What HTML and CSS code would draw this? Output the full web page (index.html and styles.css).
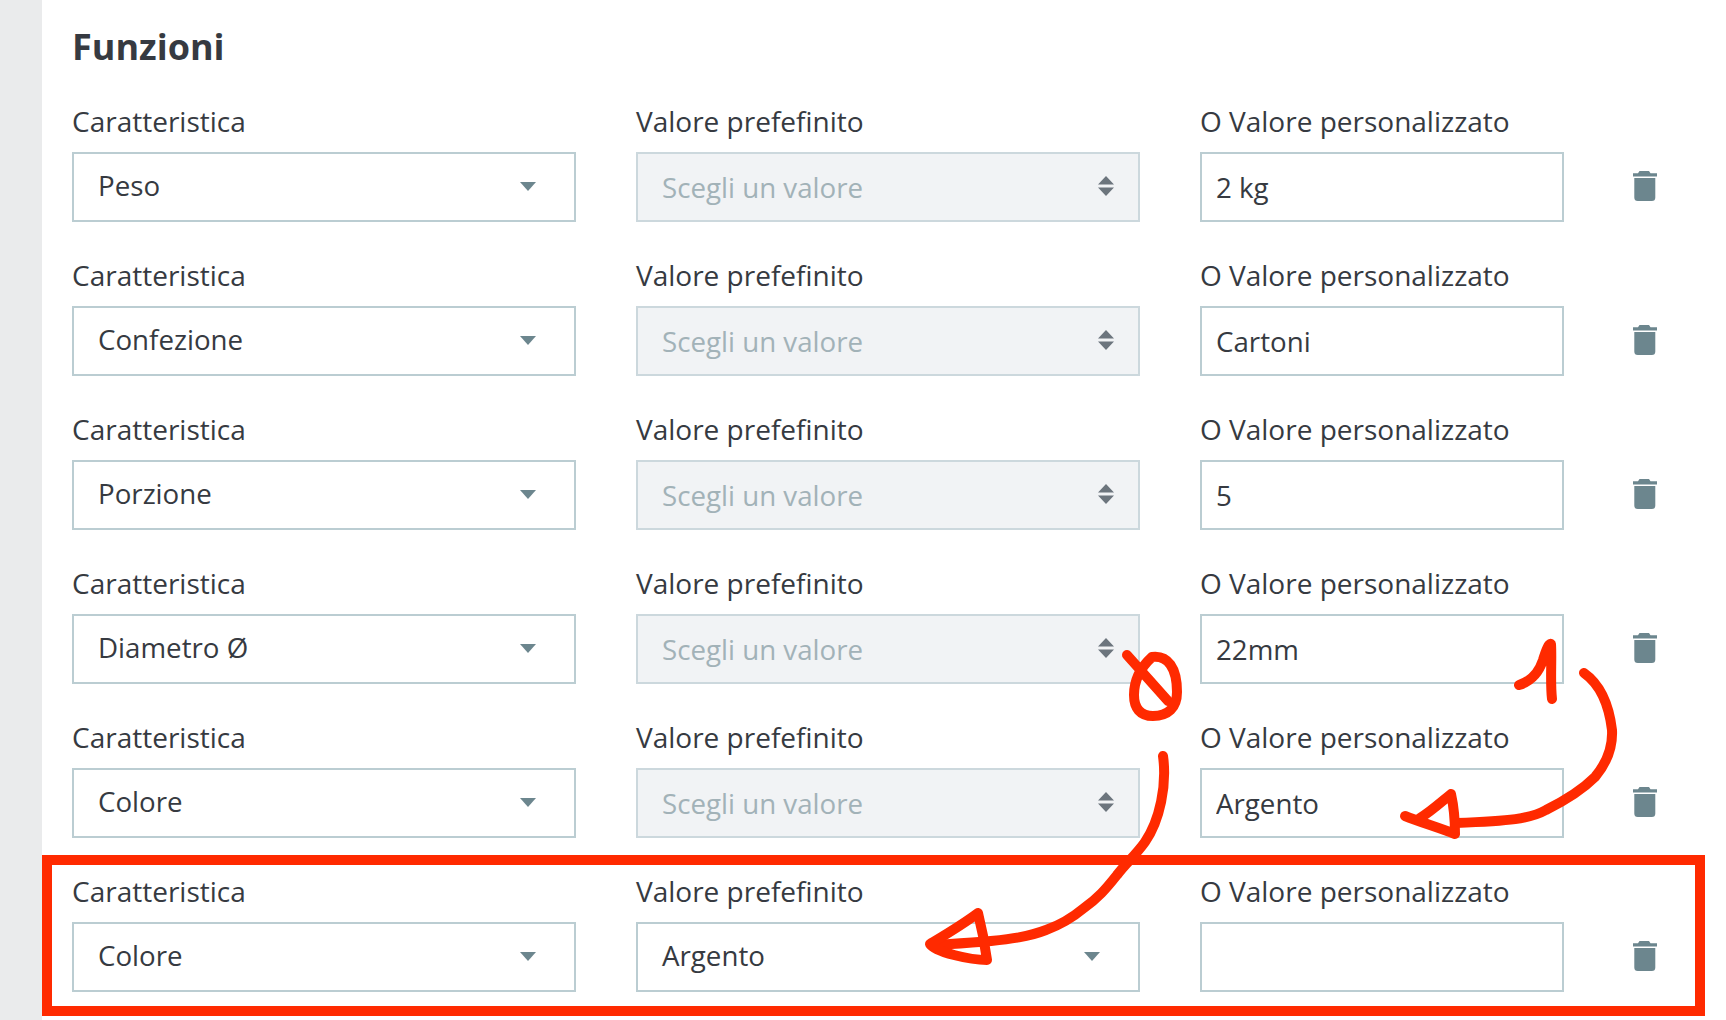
FILE: index.html
```html
<!DOCTYPE html>
<html lang="it">
<head>
  <meta charset="UTF-8" />
  <title>Funzioni</title>
  <link rel="stylesheet" href="styles.css">
</head>
<body>
  <div class="sidebar"></div>
  <main class="content">
    <h2>Funzioni</h2>

    <div class="riga">
      <div class="campo"><label>Caratteristica</label><div class="select"><span>Peso</span><i class="freccia"></i></div></div>
      <div class="campo"><label>Valore prefefinito</label><div class="select disabled"><span>Scegli un valore</span><svg class="updown" viewBox="0 0 16 20"><path d="M8 0l8 8.500H0zM8 20L0 11.500h16z"/></svg></div></div>
      <div class="campo"><label>O Valore personalizzato</label><input class="testo" type="text" value="2 kg"></div>
      <svg class="cestino" viewBox="0 0 24 30"><path d="M6.500 0h9.500l1.500 2.200H24v3.400H0V2.200h5z"/><path d="M1.300 7h21v19.500a3.500 3.500 0 0 1-3.500 3.500H4.800a3.500 3.500 0 0 1-3.500-3.500z"/></svg>
    </div>

    <div class="riga">
      <div class="campo"><label>Caratteristica</label><div class="select"><span>Confezione</span><i class="freccia"></i></div></div>
      <div class="campo"><label>Valore prefefinito</label><div class="select disabled"><span>Scegli un valore</span><svg class="updown" viewBox="0 0 16 20"><path d="M8 0l8 8.500H0zM8 20L0 11.500h16z"/></svg></div></div>
      <div class="campo"><label>O Valore personalizzato</label><input class="testo" type="text" value="Cartoni"></div>
      <svg class="cestino" viewBox="0 0 24 30"><path d="M6.500 0h9.500l1.500 2.200H24v3.400H0V2.200h5z"/><path d="M1.300 7h21v19.500a3.500 3.500 0 0 1-3.500 3.500H4.800a3.500 3.500 0 0 1-3.500-3.500z"/></svg>
    </div>

    <div class="riga">
      <div class="campo"><label>Caratteristica</label><div class="select"><span>Porzione</span><i class="freccia"></i></div></div>
      <div class="campo"><label>Valore prefefinito</label><div class="select disabled"><span>Scegli un valore</span><svg class="updown" viewBox="0 0 16 20"><path d="M8 0l8 8.500H0zM8 20L0 11.500h16z"/></svg></div></div>
      <div class="campo"><label>O Valore personalizzato</label><input class="testo" type="text" value="5"></div>
      <svg class="cestino" viewBox="0 0 24 30"><path d="M6.500 0h9.500l1.500 2.200H24v3.400H0V2.200h5z"/><path d="M1.300 7h21v19.500a3.500 3.500 0 0 1-3.500 3.500H4.800a3.500 3.500 0 0 1-3.500-3.500z"/></svg>
    </div>

    <div class="riga">
      <div class="campo"><label>Caratteristica</label><div class="select"><span>Diametro Ø</span><i class="freccia"></i></div></div>
      <div class="campo"><label>Valore prefefinito</label><div class="select disabled"><span>Scegli un valore</span><svg class="updown" viewBox="0 0 16 20"><path d="M8 0l8 8.500H0zM8 20L0 11.500h16z"/></svg></div></div>
      <div class="campo"><label>O Valore personalizzato</label><input class="testo" type="text" value="22mm"></div>
      <svg class="cestino" viewBox="0 0 24 30"><path d="M6.500 0h9.500l1.500 2.200H24v3.400H0V2.200h5z"/><path d="M1.300 7h21v19.500a3.500 3.500 0 0 1-3.500 3.500H4.800a3.500 3.500 0 0 1-3.500-3.500z"/></svg>
    </div>

    <div class="riga">
      <div class="campo"><label>Caratteristica</label><div class="select"><span>Colore</span><i class="freccia"></i></div></div>
      <div class="campo"><label>Valore prefefinito</label><div class="select disabled"><span>Scegli un valore</span><svg class="updown" viewBox="0 0 16 20"><path d="M8 0l8 8.500H0zM8 20L0 11.500h16z"/></svg></div></div>
      <div class="campo"><label>O Valore personalizzato</label><input class="testo" type="text" value="Argento"></div>
      <svg class="cestino" viewBox="0 0 24 30"><path d="M6.500 0h9.500l1.500 2.200H24v3.400H0V2.200h5z"/><path d="M1.300 7h21v19.500a3.500 3.500 0 0 1-3.500 3.500H4.800a3.500 3.500 0 0 1-3.500-3.500z"/></svg>
    </div>

    <div class="riga">
      <div class="campo"><label>Caratteristica</label><div class="select"><span>Colore</span><i class="freccia"></i></div></div>
      <div class="campo"><label>Valore prefefinito</label><div class="select"><span>Argento</span><i class="freccia"></i></div></div>
      <div class="campo"><label>O Valore personalizzato</label><input class="testo" type="text" value=""></div>
      <svg class="cestino" viewBox="0 0 24 30"><path d="M6.500 0h9.500l1.500 2.200H24v3.400H0V2.200h5z"/><path d="M1.300 7h21v19.500a3.500 3.500 0 0 1-3.500 3.500H4.800a3.500 3.500 0 0 1-3.500-3.500z"/></svg>
    </div>
  </main>

  <!-- annotazioni a mano sopra la pagina -->
  <svg class="annotazioni" viewBox="0 0 1726 1020">
    <rect class="riquadro" x="47" y="860" width="1653" height="151"/>
    <!-- Ø -->
    <path d="M1127 655L1168 701"/>
    <path d="M1152 657C1168 655 1177 668 1177 692C1177 708 1168 716 1153 716C1140 716 1134 708 1134 695C1134 682 1140 668 1152 657"/>
    <!-- 1 -->
    <path d="M1519 685C1532 681 1539 672 1543 660C1546 650 1549 643 1551 644C1552 660 1550 682 1552 699"/>
    <!-- freccia destra -->
    <path d="M1584 673C1601 685 1609 705 1612 730C1613 750 1605 765 1595 777C1580 792 1562 802 1546 810C1530 819 1510 821 1456 823"/>
    <path d="M1405 816C1420 822 1440 828 1455 834C1455 820 1453 803 1451 794C1440 803 1430 812 1420 818"/>
    <!-- freccia in basso -->
    <path d="M1163 756C1167 785 1160 820 1145 842C1135 856 1125 864 1117 875C1105 890 1098 898 1084 908C1072 918 1060 925 1046 930C1028 937 1010 939 991 941C970 943 950 944 935 945"/>
    <path d="M978 913C962 925 945 935 930 944C935 952 970 960 987 960C985 945 981 925 978 913"/>
  </svg>
</body>
</html>
```

FILE: styles.css
```css
:root {
  --testo: #363a41;
  --bordo: #bbcdd2;
  --icona: #6c868e;
}

* {
  box-sizing: border-box;
  margin: 0;
  padding: 0;
}

body {
  font-family: "Open Sans", sans-serif;
  background: #ffffff;
  color: var(--testo);
  display: flex;
  height: 1020px;
  overflow: hidden;
  position: relative;
}

.sidebar {
  width: 42px;
  background: #eaebec;
}

.content {
  flex: 1;
  padding: 23px 0 0 30px;
}

h2 {
  font-size: 36px;
  font-weight: 700;
  line-height: 48px;
  margin-bottom: 33px;
}

.riga {
  display: grid;
  grid-template-columns: 504px 504px 364px 24px;
  column-gap: 60px;
  margin-bottom: 36px;
}

.riga .cestino {
  margin-left: 9px;
}

label {
  display: block;
  font-size: 28px;
  line-height: 34px;
  margin-bottom: 14px;
}

.select {
  height: 70px;
  border: 2px solid var(--bordo);
  padding: 0 38px 2px 24px;
  display: flex;
  align-items: center;
  justify-content: space-between;
  font-size: 27.700px;
}

.select span {
  margin-bottom: 2px;
}

.select.disabled {
  background: #f1f3f5;
  border-color: #ccd8dd;
  color: #a2b2b8;
  padding: 0 24px 1px 24px;
}

.select.disabled span {
  margin-bottom: 0;
}

.freccia {
  width: 0;
  height: 0;
  border-left: 8px solid transparent;
  border-right: 8px solid transparent;
  border-top: 9px solid var(--icona);
}

.updown {
  width: 16px;
  height: 20px;
  fill: #6c757d;
  margin-top: -1px;
}

.testo {
  display: block;
  width: 100%;
  height: 70px;
  border: 2px solid var(--bordo);
  padding: 0 14px 1px;
  font-family: inherit;
  font-size: 27.700px;
  color: var(--testo);
  background: #ffffff;
  outline: none;
}

.cestino {
  width: 24px;
  height: 30px;
  fill: var(--icona);
  align-self: end;
  margin-bottom: 21px;
}

.annotazioni {
  position: absolute;
  left: 0;
  top: 0;
  width: 1726px;
  height: 1020px;
  fill: none;
  stroke: #ff2a00;
  stroke-width: 10;
  stroke-linecap: round;
  stroke-linejoin: round;
  pointer-events: none;
}

.riquadro {
  stroke-width: 10;
  stroke-linecap: butt;
  stroke-linejoin: miter;
}
```
